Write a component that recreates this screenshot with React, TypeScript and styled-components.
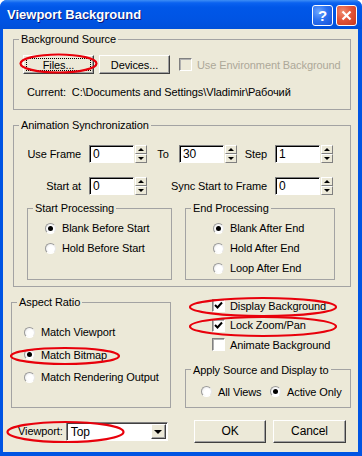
import React from "react";
import styled, { createGlobalStyle, css } from "styled-components";

const GlobalStyle = createGlobalStyle`
  body {
    margin: 0;
    background: #ffffff;
    font-family: "Liberation Sans", Arial, sans-serif;
    font-size: 11px;
    letter-spacing: -0.1px;
    color: #000;
  }
`;

const Window = styled.div`
  position: relative;
  width: 362px;
  height: 456px;
  background: #0054e3;
  border-radius: 7px 7px 0 0;
  display: flex;
  flex-direction: column;
  overflow: hidden;
`;

const TitleBar = styled.div`
  height: 29px;
  flex: none;
  display: flex;
  align-items: center;
  gap: 3px;
  padding: 0 5px 0 7px;
  background: linear-gradient(
    180deg,
    #3d8ef5 0%,
    #0a62f0 10%,
    #0057e8 25%,
    #0054e3 70%,
    #0050da 100%
  );
`;

const Title = styled.div`
  flex: 1;
  color: #fff;
  font-weight: bold;
  font-size: 13px;
  letter-spacing: 0;
  text-shadow: 1px 1px 0 #0a1a7a;
  padding-bottom: 1px;
`;

const TitleButton = styled.div<{ $close?: boolean }>`
  width: 21px;
  height: 21px;
  box-sizing: border-box;
  border: 1px solid #fff;
  border-radius: 3px;
  display: flex;
  align-items: center;
  justify-content: center;
  color: #fff;
  font-weight: bold;
  font-size: 15px;
  margin-top: 2px;
  background: ${(p) =>
    p.$close
      ? "radial-gradient(circle at 30% 30%, #f08c6f 0%, #e2553a 45%, #c8381c 100%)"
      : "radial-gradient(circle at 30% 30%, #6fa7ff 0%, #2c72f0 45%, #1450d8 100%)"};
`;

const Body = styled.div`
  flex: 1;
  margin: 0 4px 4px 3px;
  background: #ece9d8;
  padding: 3px 7px 0 8px;
  display: flex;
  flex-direction: column;
`;

const Group = styled.fieldset<{ $width?: number; $ml?: number; $mt?: number }>`
  margin: ${(p) => `${p.$mt ?? 0}px 0 0 ${p.$ml ?? 0}px`};
  padding: 0;
  border: 1px solid #a3a3a3;
  min-width: 0;
  box-sizing: border-box;
  ${(p) =>
    p.$width &&
    css`
      width: ${p.$width}px;
    `}
`;

const Legend = styled.legend`
  padding: 0 2px;
  margin-left: 5px;
  line-height: 14px;
  font-size: 11px;
`;

const GroupBody = styled.div<{ $pad: string }>`
  padding: ${(p) => p.$pad};
`;

const ButtonRow = styled.div`
  display: flex;
  align-items: center;
`;

const PushButton = styled.div<{ $w: number; $h: number; $focused?: boolean; $ml?: number }>`
  width: ${(p) => p.$w}px;
  height: ${(p) => p.$h}px;
  margin-left: ${(p) => p.$ml ?? 0}px;
  box-sizing: border-box;
  border: 1px solid;
  border-color: #ffffff #404040 #404040 #ffffff;
  box-shadow: inset -1px -1px 0 #a0a0a0;
  background: #ece9d8;
  display: flex;
  align-items: center;
  justify-content: center;
  position: relative;
  ${(p) =>
    p.$focused &&
    css`
      &::after {
        content: "";
        position: absolute;
        inset: 2px;
        border: 1px dotted #000;
      }
    `}
`;

const CheckLine = styled.div<{ $h?: number; $disabled?: boolean; $ml?: number }>`
  display: flex;
  align-items: center;
  gap: 5px;
  height: ${(p) => p.$h ?? 14}px;
  margin-left: ${(p) => p.$ml ?? 0}px;
  color: ${(p) => (p.$disabled ? "#aca899" : "#000")};
`;

const CheckBox = styled.div<{ $disabled?: boolean }>`
  width: 13px;
  height: 13px;
  box-sizing: border-box;
  border: 1px solid;
  border-color: #808080 #ffffff #ffffff #808080;
  box-shadow: inset 1px 1px 0 #b0b0b0;
  background: ${(p) => (p.$disabled ? "#ece9d8" : "#fff")};
  display: flex;
  align-items: center;
  justify-content: center;
  flex: none;
`;

const CurrentLine = styled.div`
  margin: 11px 0 0 4px;
  line-height: 14px;
  white-space: pre;
`;

const FrameGrid = styled.div`
  display: grid;
  grid-template-columns: 75px 58px 32px 58px 38px 58px;
  grid-auto-rows: 18px;
  row-gap: 14px;
  align-items: center;
`;

const FieldLabel = styled.div<{ $col: string; $center?: boolean }>`
  grid-column: ${(p) => p.$col};
  justify-self: ${(p) => (p.$center ? "center" : "end")};
  padding-right: ${(p) => (p.$center ? 0 : 8)}px;
  white-space: nowrap;
`;

const Spin = styled.div`
  display: flex;
  height: 18px;
  gap: 1px;
`;

const NumField = styled.div`
  width: 45px;
  height: 18px;
  box-sizing: border-box;
  background: #fff;
  border: 1px solid;
  border-color: #808080 #ffffff #ffffff #808080;
  box-shadow: inset 1px 1px 0 #000;
  padding: 1px 0 0 3px;
  font-size: 12px;
  line-height: 14px;
`;

const SpinButtons = styled.div`
  width: 12px;
  display: flex;
  flex-direction: column;
`;

const SpinHalf = styled.div<{ $down?: boolean }>`
  flex: 1;
  box-sizing: border-box;
  border: 1px solid;
  border-color: #ffffff #808080 #808080 #ffffff;
  background: #ece9d8;
  display: flex;
  align-items: center;
  justify-content: center;

  &::before {
    content: "";
    width: 0;
    height: 0;
    border-left: 3px solid transparent;
    border-right: 3px solid transparent;
    ${(p) =>
      p.$down
        ? css`
            border-top: 3px solid #000;
          `
        : css`
            border-bottom: 3px solid #000;
          `}
  }
`;

const SubRow = styled.div`
  display: flex;
  gap: 13px;
  margin-top: 6px;
  padding-left: 13px;
  align-items: stretch;
`;

const RadioLine = styled.div<{ $h: number; $w?: number }>`
  display: flex;
  align-items: center;
  gap: 6px;
  height: ${(p) => p.$h}px;
  ${(p) =>
    p.$w &&
    css`
      width: ${p.$w}px;
    `}
  white-space: nowrap;
`;

const RadioDot = styled.div<{ $on?: boolean }>`
  width: 11px;
  height: 11px;
  box-sizing: border-box;
  border-radius: 50%;
  border: 1px solid;
  border-color: #9a9a9a #e8e8e8 #ffffff #9a9a9a;
  background: radial-gradient(circle at 60% 60%, #ffffff 40%, #e4e4e4 100%);
  flex: none;
  display: flex;
  align-items: center;
  justify-content: center;

  &::after {
    content: "";
    width: 5px;
    height: 5px;
    border-radius: 50%;
    background: ${(p) => (p.$on ? "#000" : "transparent")};
  }
`;

const RadioRow = styled.div`
  display: flex;
`;

const Lower = styled.div`
  display: flex;
  margin-top: 8px;
  align-items: flex-start;
`;

const RightColumn = styled.div`
  margin-left: 14px;
  width: 166px;
  display: flex;
  flex-direction: column;
`;

const CheckList = styled.div`
  padding: 1px 0 0 27px;
`;

const Footer = styled.div`
  display: flex;
  align-items: center;
  margin-top: 12px;
  padding: 0 5px 0 7px;
  height: 23px;
`;

const FooterLabel = styled.div`
  margin-right: 3px;
`;

const Combo = styled.div`
  width: 102px;
  height: 19px;
  box-sizing: border-box;
  background: #fff;
  border: 1px solid;
  border-color: #808080 #ffffff #ffffff #808080;
  box-shadow: inset 1px 1px 0 #404040;
  display: flex;
  align-items: center;
  padding: 2px 1px 1px 4px;
  font-size: 12px;
`;

const ComboText = styled.div`
  flex: 1;
`;

const ComboArrow = styled.div`
  width: 15px;
  height: 15px;
  box-sizing: border-box;
  border: 1px solid;
  border-color: #ffffff #404040 #404040 #ffffff;
  box-shadow: inset -1px -1px 0 #a0a0a0;
  background: #ece9d8;
  display: flex;
  align-items: center;
  justify-content: center;

  &::before {
    content: "";
    border-left: 4px solid transparent;
    border-right: 4px solid transparent;
    border-top: 4px solid #000;
  }
`;

const DialogButtons = styled.div`
  margin-left: auto;
  display: flex;
  gap: 7px;
  font-size: 12px;
`;

const Marks = styled.svg`
  position: absolute;
  inset: 0;
  pointer-events: none;
`;

const Check = () => (
  <svg width="9" height="9" viewBox="0 0 9 9">
    <path d="M1 4 L3.5 6.5 L8 1.5" fill="none" stroke="#000" strokeWidth="2" />
  </svg>
);

const SpinField = ({ value }: { value: string }) => (
  <Spin>
    <NumField>{value}</NumField>
    <SpinButtons>
      <SpinHalf />
      <SpinHalf $down />
    </SpinButtons>
  </Spin>
);

const Radio = ({ on, label, h, w }: { on?: boolean; label: string; h: number; w?: number }) => (
  <RadioLine $h={h} $w={w}>
    <RadioDot $on={on} />
    {label}
  </RadioLine>
);

const ellipses = [
  { cx: 58.5, cy: 63.5, rx: 38, ry: 9 },
  { cx: 263, cy: 307, rx: 73, ry: 9 },
  { cx: 263, cy: 326.5, rx: 73, ry: 9.5 },
  { cx: 65, cy: 356, rx: 54, ry: 8 },
  { cx: 65.5, cy: 432, rx: 58, ry: 10 },
];

export default function App() {
  return (
    <>
      <GlobalStyle />
      <Window>
        <TitleBar>
          <Title>Viewport Background</Title>
          <TitleButton>?</TitleButton>
          <TitleButton $close>
            <svg width="11" height="11" viewBox="0 0 11 11">
              <path d="M1.5 1.5 L9.5 9.5 M9.5 1.5 L1.5 9.5" stroke="#fff" strokeWidth="2.2" />
            </svg>
          </TitleButton>
        </TitleBar>
        <Body>
          <Group $ml={2} $width={338}>
            <Legend>Background Source</Legend>
            <GroupBody $pad="9px 0 10px 9px">
              <ButtonRow>
                <PushButton $w={71} $h={19} $focused>
                  Files...
                </PushButton>
                <PushButton $w={71} $h={19} $ml={5}>
                  Devices...
                </PushButton>
                <CheckLine $disabled $ml={9}>
                  <CheckBox $disabled />
                  Use Environment Background
                </CheckLine>
              </ButtonRow>
              <CurrentLine>{"Current:  C:\\Documents and Settings\\Vladimir\\Рабочий"}</CurrentLine>
            </GroupBody>
          </Group>

          <Group $ml={2} $mt={8} $width={338}>
            <Legend>Animation Synchronization</Legend>
            <GroupBody $pad="13px 15px 6px 0">
              <FrameGrid>
                <FieldLabel $col="1">Use Frame</FieldLabel>
                <SpinField value="0" />
                <FieldLabel $col="3" $center>
                  To
                </FieldLabel>
                <SpinField value="30" />
                <FieldLabel $col="5">Step</FieldLabel>
                <SpinField value="1" />
                <FieldLabel $col="1">Start at</FieldLabel>
                <SpinField value="0" />
                <FieldLabel $col="3 / 6">Sync Start to Frame</FieldLabel>
                <SpinField value="0" />
              </FrameGrid>
              <SubRow>
                <Group $width={145}>
                  <Legend>Start Processing</Legend>
                  <GroupBody $pad="3px 0 1px 17px">
                    <Radio on label="Blank Before Start" h={20} />
                    <Radio label="Hold Before Start" h={20} />
                  </GroupBody>
                </Group>
                <Group $width={150}>
                  <Legend>End Processing</Legend>
                  <GroupBody $pad="3px 0 1px 27px">
                    <Radio on label="Blank After End" h={20} />
                    <Radio label="Hold After End" h={20} />
                    <Radio label="Loop After End" h={20} />
                  </GroupBody>
                </Group>
              </SubRow>
            </GroupBody>
          </Group>

          <Lower>
            <Group $width={160}>
              <Legend>Aspect Ratio</Legend>
              <GroupBody $pad="12px 0 18px 12px">
                <Radio label="Match Viewport" h={22.5} />
                <Radio on label="Match Bitmap" h={22.5} />
                <Radio label="Match Rendering Output" h={22.5} />
              </GroupBody>
            </Group>
            <RightColumn>
              <CheckList>
                <CheckLine $h={19.5}>
                  <CheckBox>
                    <Check />
                  </CheckBox>
                  Display Background
                </CheckLine>
                <CheckLine $h={19.5}>
                  <CheckBox>
                    <Check />
                  </CheckBox>
                  Lock Zoom/Pan
                </CheckLine>
                <CheckLine $h={19.5}>
                  <CheckBox />
                  Animate Background
                </CheckLine>
              </CheckList>
              <Group $mt={8}>
                <Legend>Apply Source and Display to</Legend>
                <GroupBody $pad="6px 0 6px 15px">
                  <RadioRow>
                    <Radio label="All Views" h={18} w={69} />
                    <Radio on label="Active Only" h={18} />
                  </RadioRow>
                </GroupBody>
              </Group>
            </RightColumn>
          </Lower>

          <Footer>
            <FooterLabel>Viewport:</FooterLabel>
            <Combo>
              <ComboText>Top</ComboText>
              <ComboArrow />
            </Combo>
            <DialogButtons>
              <PushButton $w={72} $h={23}>
                OK
              </PushButton>
              <PushButton $w={73} $h={23}>
                Cancel
              </PushButton>
            </DialogButtons>
          </Footer>
        </Body>
        <Marks width="362" height="456" viewBox="0 0 362 456">
          {ellipses.map((e, i) => (
            <ellipse key={i} {...e} fill="none" stroke="#e8000b" strokeWidth="2.2" />
          ))}
        </Marks>
      </Window>
    </>
  );
}
